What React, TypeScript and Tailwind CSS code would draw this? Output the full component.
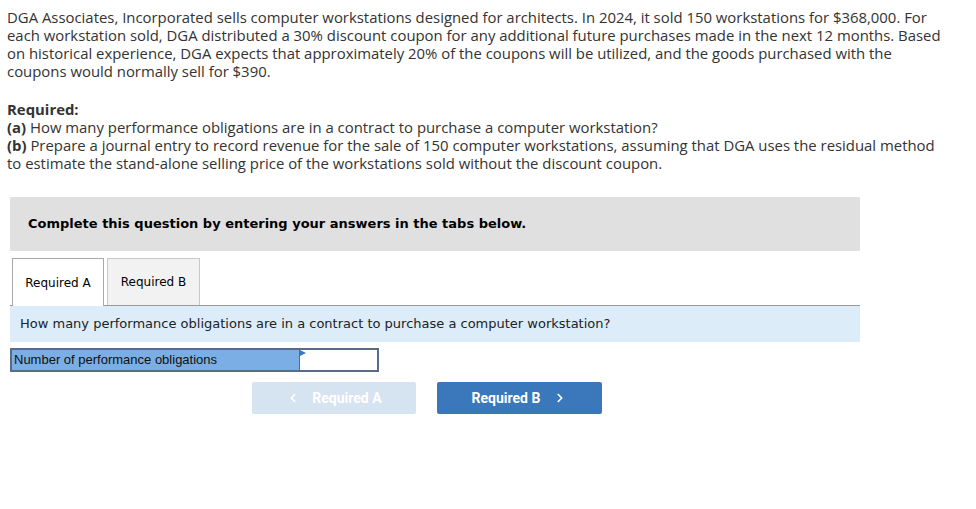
import React from "react"
import { ChevronLeft, ChevronRight } from "lucide-react"

const body = { fontFamily: "'Open Sans', Lato, sans-serif" }
const verdana = { fontFamily: "'DejaVu Sans', Verdana, sans-serif" }

export default function App() {
  return (
    <div className="min-h-screen bg-white text-[#333]">
      <div className="px-[7px] pt-[8px] text-[14.9px] leading-[18px] whitespace-nowrap" style={body}>
        <p>
          DGA Associates, Incorporated sells computer workstations designed for architects. In 2024, it sold 150
          workstations for $368,000. For
          <br />
          each workstation sold, DGA distributed a 30% discount coupon for any additional future purchases made in the
          next 12 months. Based
          <br />
          on historical experience, DGA expects that approximately 20% of the coupons will be utilized, and the goods
          purchased with the
          <br />
          coupons would normally sell for $390.
        </p>
        <p className="mt-[20px] font-bold">Required:</p>
        <p>
          <b>(a)</b> How many performance obligations are in a contract to purchase a computer workstation?
        </p>
        <p>
          <b>(b)</b> Prepare a journal entry to record revenue for the sale of 150 computer workstations, assuming
          that DGA uses the residual method
          <br />
          to estimate the stand-alone selling price of the workstations sold without the discount coupon.
        </p>
      </div>

      <div className="w-[850px] ml-[10px]">
        <div className="mt-[25px] h-[54px] bg-[#e0e0e0] flex items-center pl-[18px]">
          <p className="text-[13px] font-bold text-black" style={verdana}>
            Complete this question by entering your answers in the tabs below.
          </p>
        </div>

        <div className="mt-[7px] flex items-end border-b border-[#999] pl-[2px]">
          <div
            className="w-[92px] h-[48px] -mb-px bg-white border border-b-0 border-[#a8a8a8] flex items-center justify-center text-[12px] text-black"
            style={verdana}
          >
            Required A
          </div>
          <div
            className="ml-[3px] w-[93px] h-[47px] bg-[#f2f2f2] border border-b-0 border-[#c8c8c8] flex items-center justify-center text-[12px] text-black"
            style={verdana}
          >
            Required B
          </div>
        </div>

        <div className="h-[36px] bg-[#dcecf9] flex items-center pl-[10px]">
          <p className="text-[13px] text-[#222]" style={verdana}>
            How many performance obligations are in a contract to purchase a computer workstation?
          </p>
        </div>

        <div className="mt-[6px] flex h-[24px]">
          <div
            className="w-[290px] bg-[#7aaee4] border-2 border-r border-[#5a6b85] flex items-center pl-[2px] text-[13px] text-[#111]"
            style={{ fontFamily: "'Liberation Sans', Arial, sans-serif" }}
          >
            Number of performance obligations
          </div>
          <div className="relative w-[79px] bg-white border-2 border-l-0 border-[#5a6b85]">
            <svg className="absolute left-0 top-0" width="6" height="6" viewBox="0 0 6 6">
              <path d="M0 0 L6 3 L0 6 Z" fill="#3a78c0" />
            </svg>
          </div>
        </div>

        <div className="mt-[10px] flex gap-[21px] pl-[242px]" style={{ fontFamily: "Roboto, sans-serif" }}>
          <button className="w-[164px] h-[32px] rounded-[2px] bg-[#d6e3f1] text-white font-bold text-[14px] flex items-center justify-center gap-[12px]">
            <ChevronLeft size={14} strokeWidth={3} />
            <span>Required A</span>
          </button>
          <button className="w-[165px] h-[32px] rounded-[2px] bg-[#3a77bb] text-white font-bold text-[14px] flex items-center justify-center gap-[13px]">
            <span>Required B</span>
            <ChevronRight size={14} strokeWidth={3} />
          </button>
        </div>
      </div>
    </div>
  )
}
